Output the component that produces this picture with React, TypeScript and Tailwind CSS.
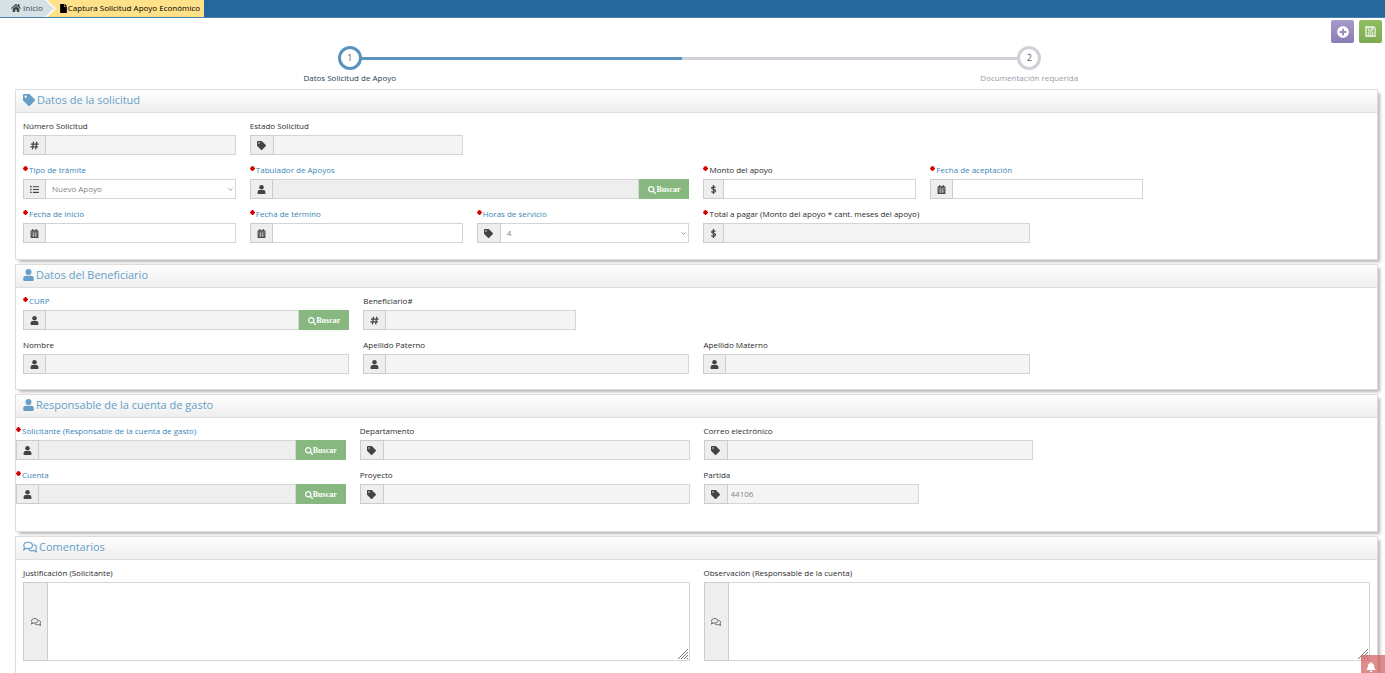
import { useId, useState } from 'react';
import type { ComponentType, ReactNode } from 'react';
import { FaBell, FaFile, FaHome, FaListUl, FaPlusCircle, FaSearch, FaTag } from 'react-icons/fa';
import { FiChevronDown } from 'react-icons/fi';

type Tone = 'white' | 'light' | 'gray';
type Icon = ComponentType<{ className?: string }>;

const tones: Record<Tone, string> = {
  white: 'bg-white',
  light: 'bg-[#f4f4f4]',
  gray: 'bg-[#eeeeee]',
};

const UserIcon: Icon = ({ className }) => (
  <svg viewBox="0 0 14 16" className={className} fill="currentColor" aria-hidden="true">
    <circle cx="7" cy="4" r="4" />
    <path d="M3.500 9h7A3.500 3.500 0 0 1 14 12.500V14.500a1.500 1.500 0 0 1-1.500 1.500h-11A1.500 1.500 0 0 1 0 14.500V12.500A3.500 3.500 0 0 1 3.500 9z" />
  </svg>
);

const CalendarIcon: Icon = ({ className }) => (
  <svg viewBox="0 0 14 16" className={className} aria-hidden="true">
    <path d="M1.500 2H3V0h2v2h4V0h2v2h1.500A1.500 1.500 0 0 1 14 3.500V14.500a1.500 1.500 0 0 1-1.500 1.500h-11A1.500 1.500 0 0 1 0 14.500V3.500A1.500 1.500 0 0 1 1.500 2z" fill="currentColor" />
    <path d="M0 5.500h14M1.500 9h11M1.500 12.300h11M5 6.500v8M9 6.500v8" stroke="#eeeeee" strokeWidth="0.900" fill="none" />
  </svg>
);

const HashIcon: Icon = ({ className }) => (
  <svg viewBox="0 0 14 14" className={className} fill="none" stroke="currentColor" strokeWidth="1.900" aria-hidden="true">
    <path d="M5.500 1 3.800 13M10.500 1 8.800 13M1.500 4.800h12M.5 9.200h12" />
  </svg>
);

const DollarIcon: Icon = ({ className }) => (
  <svg viewBox="0 0 10 16" className={className} fill="none" stroke="currentColor" strokeWidth="2.200" aria-hidden="true">
    <path d="M8.500 4.300C7.500 3.500 6.300 3.200 5 3.200c-2 0-3.300.9-3.300 2.300C1.700 9 8.700 6.800 8.700 10.400c0 1.500-1.500 2.500-3.700 2.500-1.500 0-2.800-.4-3.800-1.300M5 0v16" />
  </svg>
);

const CommentsIcon: Icon = ({ className }) => (
  <svg viewBox="0 0 14 12" className={className} fill="none" stroke="currentColor" strokeWidth="1.100" strokeLinejoin="round" aria-hidden="true">
    <path d="M5.200 1.200c2.500 0 4.200 1.200 4.200 3.200S7.700 7.600 5.200 7.600c-.7 0-1.300-.1-1.800-.3L.6 9l.9-2.700C1 5.700.8 5.100.8 4.400c0-2 1.900-3.200 4.400-3.200z" />
    <path d="M10.500 3.700c1.700.3 2.900 1.400 2.900 2.900 0 .7-.3 1.300-.7 1.800l.8 2.500-2.600-1.300c-2.300.6-4.500 0-5.400-1.300" />
  </svg>
);

const SaveIcon: Icon = ({ className }) => (
  <svg viewBox="0 0 12 12" className={className} fill="none" stroke="currentColor" aria-hidden="true">
    <path d="M1 1h8.500L11 2.500V11H1z" strokeWidth="1.200" />
    <path d="M3.500 1v3.500h5V1M6.800 1.500v2" strokeWidth="1" />
    <path d="M3.500 11V6.500h5V11M4.500 7.500l3 3M7.500 7.500l-3 3" strokeWidth="0.900" />
  </svg>
);

const addonWidth = (icon: Icon) => {
  if (icon === DollarIcon) return 'w-[21px]';
  if (icon === FaTag) return 'w-6';
  return 'w-[23px]';
};

function RequiredMark() {
  return (
    <svg viewBox="0 0 10 10" className="mr-px mb-[3px] size-[5px] stroke-[#d40000]" aria-hidden="true">
      <path d="M5 0v10M0 5h10M1.500 1.500l7 7M8.500 1.500l-7 7" fill="none" strokeWidth="2.200" />
    </svg>
  );
}

interface LabelProps {
  id: string;
  text: string;
  required?: boolean;
  link?: boolean;
}

function FieldLabel({ id, text, required, link }: LabelProps) {
  return (
    <label htmlFor={id} className={`flex h-[18px] items-center whitespace-nowrap ${link ? 'text-[#3a85b8]' : 'text-[#2b2b2b]'}`}>
      {required && <RequiredMark />}
      {text}
    </label>
  );
}

interface FieldProps {
  label: string;
  icon: Icon;
  span: string;
  tone?: Tone;
  required?: boolean;
  link?: boolean;
  search?: boolean;
  value?: string;
  options?: string[];
}

function Field({ label, icon: Glyph, span, tone = 'light', required, link, search, value = '', options }: FieldProps) {
  const id = useId();
  const [current, setCurrent] = useState(options ? options[0] : value);

  return (
    <div className={span}>
      <FieldLabel id={id} text={label} required={required} link={link} />
      <div className="flex h-5">
        <span className={`flex shrink-0 items-center justify-center border border-[#cccccc] bg-[#eeeeee] text-[#444444] ${addonWidth(Glyph)}`}>
          <Glyph className="size-[9px]" />
        </span>
        {options ? (
          <div className="relative flex min-w-0 flex-1">
            <select
              id={id}
              value={current}
              onChange={e => setCurrent(e.target.value)}
              className="w-full appearance-none border border-l-0 border-[#d5d5d5] bg-white px-[6px] text-[#858585]"
            >
              {options.map(o => <option key={o}>{o}</option>)}
            </select>
            <FiChevronDown className="pointer-events-none absolute top-[7px] right-[2px] size-[7px] text-[#555555]" />
          </div>
        ) : (
          <input
            id={id}
            value={current}
            readOnly={tone !== 'white'}
            onChange={e => setCurrent(e.target.value)}
            className={`min-w-0 flex-1 border border-l-0 border-[#d5d5d5] px-[3px] text-[#858585] ${tones[tone]}`}
          />
        )}
        {search && (
          <button type="button" className="flex w-[50px] shrink-0 items-center justify-center bg-[#87b87f] pt-px font-['Liberation_Serif',serif] font-bold text-white">
            <FaSearch className="size-2" />
            Buscar
          </button>
        )}
      </div>
    </div>
  );
}

function CommentField({ label }: { label: string }) {
  const id = useId();

  return (
    <div className="col-span-6">
      <FieldLabel id={id} text={label} />
      <div className="flex h-[79px]">
        <span className="flex w-[25px] shrink-0 items-center justify-center border border-[#cccccc] bg-[#eeeeee] text-[#444444]">
          <CommentsIcon className="size-[10px]" />
        </span>
        <div className="relative flex min-w-0 flex-1">
          <textarea id={id} className="w-full resize-none border border-l-0 border-[#d5d5d5] bg-white p-1" />
          <svg viewBox="0 0 10 10" className="pointer-events-none absolute right-[2px] bottom-[2px] size-[10px] stroke-[#666666]">
            <path d="M0 10 10 0M3 10l7-7M6 10l4-4M9 10l1-1" fill="none" strokeWidth="0.9" />
          </svg>
        </div>
      </div>
    </div>
  );
}

interface PanelProps {
  title: string;
  icon: Icon;
  iconSize?: string;
  body: string;
  children: ReactNode;
}

function Panel({ title, icon: Glyph, iconSize = 'size-3', body, children }: PanelProps) {
  return (
    <section className="border border-[#dddddd] bg-white shadow-[3px_3px_3px_-1px_#b8b4b8]">
      <h2 className="flex h-[23px] items-center gap-[2px] border-b border-[#dddddd] bg-linear-to-b from-white to-[#eeeeee] px-[7px] pb-[2px] text-[11px] text-[#669fc7]">
        <Glyph className={iconSize} />
        {title}
      </h2>
      <div className={`grid grid-cols-12 gap-x-[14px] gap-y-[6px] pt-1 ${body}`}>{children}</div>
    </section>
  );
}

function Step({ number, label, active }: { number: number; label: string; active?: boolean }) {
  return (
    <li className="relative flex flex-1 flex-col items-center">
      <span className={`absolute top-[11px] h-[3px] ${active ? 'right-2 left-1/2 bg-[#5b93bf]' : 'right-1/2 -left-2 bg-[#ced1d6]'}`} />
      <span className={`relative flex size-6 items-center justify-center rounded-full border-3 bg-white text-[9px] text-[#555555] ${active ? 'border-[#5b93bf]' : 'border-[#ced1d6]'}`}>
        {number}
      </span>
      <span className={`leading-4 ${active ? 'text-[#2b3d53]' : 'text-[#949ea7]'}`}>{label}</span>
    </li>
  );
}

export default function App() {
  return (
    <div className="h-screen overflow-hidden bg-white font-['Open_Sans',sans-serif] text-[8px]">
      <nav className="flex h-[18px] border-b border-[#4a80ae] bg-[#26689c]">
        <a href="#inicio" className="flex items-center gap-[2px] bg-[#d5e0e7] pb-px pl-[11px] text-[#444444]">
          <FaHome className="size-[10px]" />
          Inicio
        </a>
        <a href="#captura" className="flex items-center bg-[#fee188] pr-1 text-black">
          <svg viewBox="0 0 14 17" className="mr-[2px] h-[17px] w-[14px]">
            <path d="M0 0h4l9 8.500-9 8.500H0z" fill="#ffffff" />
            <path d="M0 0h2l9 8.500-9 8.500H0z" fill="#d5e0e7" />
          </svg>
          <FaFile className="size-[9px]" />
          <span className="pb-px">Captura Solicitud Apoyo Económico</span>
        </a>
      </nav>

      <div className="flex h-[28px] items-start justify-end gap-[5px] pt-[2px] pr-[3px]">
        <button type="button" aria-label="Nuevo" className="flex size-[23px] items-center justify-center rounded-xs bg-linear-to-b from-[#a69bcb] to-[#8a7cb4] text-white">
          <FaPlusCircle className="size-3" />
        </button>
        <button type="button" aria-label="Guardar" className="flex size-[23px] items-center justify-center rounded-xs bg-linear-to-b from-[#8ebf60] to-[#7daa50] text-white">
          <SaveIcon className="size-[11px]" />
        </button>
      </div>

      <ol className="mr-[16px] ml-[10px] flex h-[43px]">
        <Step number={1} label="Datos Solicitud de Apoyo" active />
        <Step number={2} label="Documentación requerida" />
      </ol>

      <main className="mr-[7px] ml-[15px] flex flex-col gap-1">
        <Panel title="Datos de la solicitud" icon={FaTag} body="px-[7px] pb-4">
          <Field label="Número Solicitud" icon={HashIcon} span="col-span-2" />
          <Field label="Estado Solicitud" icon={FaTag} span="col-span-2" />
          <Field label="Tipo de trámite" icon={FaListUl} span="col-span-2 col-start-1" required link options={['Nuevo Apoyo', 'Renovación']} />
          <Field label="Tabulador de Apoyos" icon={UserIcon} span="col-span-4" tone="gray" required link search />
          <Field label="Monto del apoyo" icon={DollarIcon} span="col-span-2" tone="white" required />
          <Field label="Fecha de aceptación" icon={CalendarIcon} span="col-span-2" tone="white" required link />
          <Field label="Fecha de inicio" icon={CalendarIcon} span="col-span-2 col-start-1" tone="white" required link />
          <Field label="Fecha de término" icon={CalendarIcon} span="col-span-2" tone="white" required link />
          <Field label="Horas de servicio" icon={FaTag} span="col-span-2" required link options={['4', '6', '8']} />
          <Field label="Total a pagar (Monto del apoyo * cant. meses del apoyo)" icon={DollarIcon} span="col-span-3" required />
        </Panel>

        <Panel title="Datos del Beneficiario" icon={UserIcon} iconSize="h-3 w-[11px]" body="px-[7px] pb-[15px]">
          <Field label="CURP" icon={UserIcon} span="col-span-3" required link search />
          <Field label="Beneficiario#" icon={HashIcon} span="col-span-2" />
          <Field label="Nombre" icon={UserIcon} span="col-span-3 col-start-1" />
          <Field label="Apellido Paterno" icon={UserIcon} span="col-span-3" />
          <Field label="Apellido Materno" icon={UserIcon} span="col-span-3" />
        </Panel>

        <Panel title="Responsable de la cuenta de gasto" icon={UserIcon} iconSize="h-3 w-[11px]" body="pb-[27px]">
          <Field label="Solicitante (Responsable de la cuenta de gasto)" icon={UserIcon} span="col-span-3" tone="gray" required link search />
          <Field label="Departamento" icon={FaTag} span="col-span-3" />
          <Field label="Correo electrónico" icon={FaTag} span="col-span-3" />
          <Field label="Cuenta" icon={UserIcon} span="col-span-3 col-start-1" tone="gray" required link search />
          <Field label="Proyecto" icon={FaTag} span="col-span-3" />
          <Field label="Partida" icon={FaTag} span="col-span-2" value="44106" />
        </Panel>

        <Panel title="Comentarios" icon={CommentsIcon} iconSize="h-3 w-[14px]" body="px-[7px] pb-6">
          <CommentField label="Justificación (Solicitante)" />
          <CommentField label="Observación (Responsable de la cuenta)" />
        </Panel>
      </main>

      <button type="button" aria-label="Notificaciones" className="fixed right-0 bottom-0 flex h-[18px] w-6 items-end justify-center bg-[#d15b5b]/70 pr-1 pb-px text-white">
        <FaBell className="size-[10px]" />
      </button>
    </div>
  );
}
